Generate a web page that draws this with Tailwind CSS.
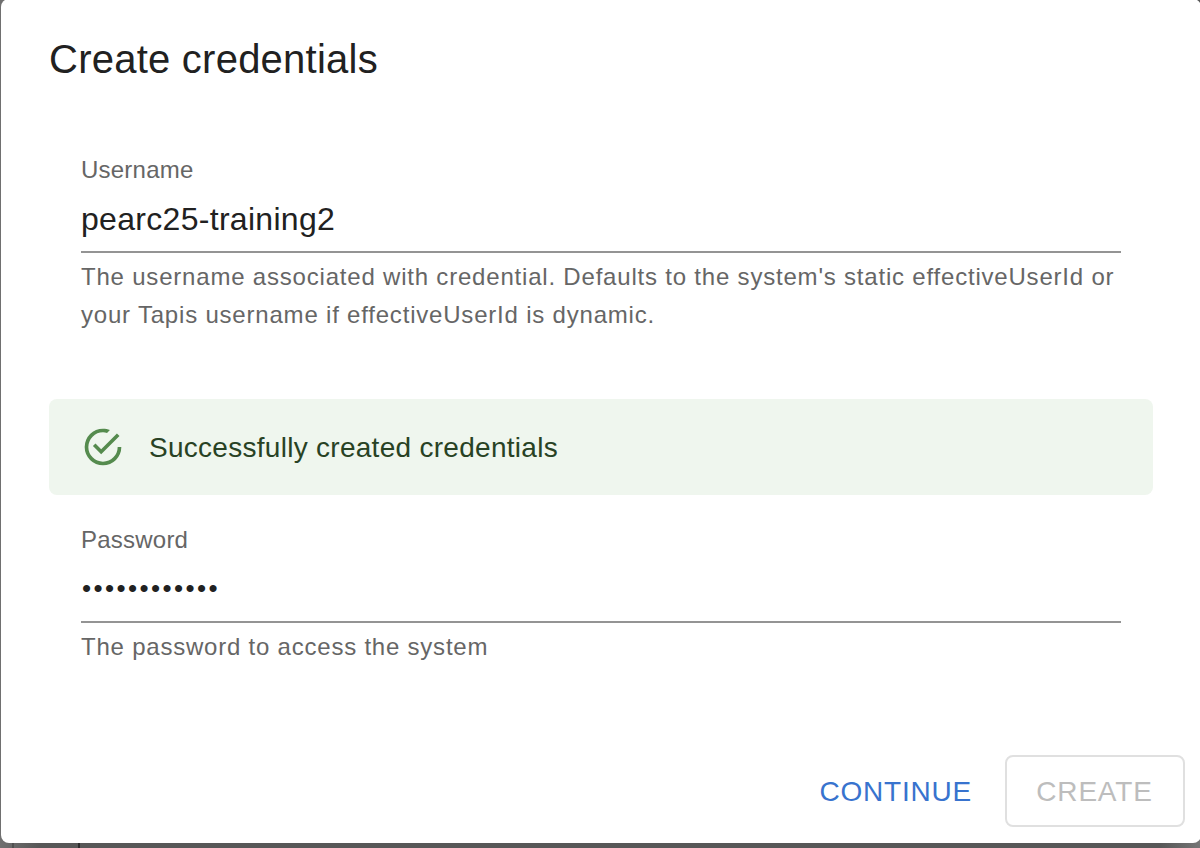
<!DOCTYPE html>
<html lang="en">
<head>
<meta charset="utf-8">
<title>Create credentials</title>
<script src="https://cdn.jsdelivr.net/npm/@tailwindcss/browser@4"></script>
</head>
<body class="relative h-[848px] w-[1200px] overflow-hidden bg-[#575757] font-['Liberation_Sans',Arial,sans-serif] antialiased">
<!-- dimmed page behind the dialog -->
<div class="absolute inset-0 bg-linear-to-r from-[#707070] to-[#575757] to-[40px]"></div>
<div class="absolute bottom-0 left-[12px] h-[5px] w-[2px] bg-[#505050]"></div>
<div class="absolute bottom-0 left-[78px] h-[5px] w-[2px] bg-[#2c2c2c]"></div>
<div class="absolute right-0 bottom-0 h-[12px] w-[40px] bg-linear-to-r from-[#575757] to-[#757575]"></div>
<main role="dialog" class="relative -mt-px ml-px flex h-[844px] w-[1200px] flex-col rounded-[8px] bg-white">
  <h1 class="mt-[28px] ml-[48px] text-[40px] leading-[64px] tracking-[0.24px] text-[#212121]">Create credentials</h1>
  <section class="mt-[60px] ml-[80px] w-[1040px]">
    <label class="block h-[38px] text-[24px] leading-[38px] tracking-[0.225px] text-[#666]">Username</label>
    <div class="h-[64px] border-b-2 border-[#949494] pt-[7px] text-[32px] leading-[46px] tracking-[0.3px] text-[#212121]">pearc25-training2</div>
    <p class="mt-[5px] text-[24px] leading-[38px] tracking-[0.8px] text-[#666]">The username associated with credential. Defaults to the system's static effectiveUserId or<br>your Tapis username if effectiveUserId is dynamic.</p>
  </section>
  <div role="alert" class="mt-[65px] ml-[48px] flex h-[96px] w-[1104px] items-center rounded-[8px] bg-[#eff6ee] pl-[32px]">
    <svg class="size-[44px] fill-[#558b4e]" viewBox="0 0 24 24"><path d="M20,12A8,8 0 0,1 12,20A8,8 0 0,1 4,12A8,8 0 0,1 12,4C12.76,4 13.5,4.11 14.2,4.31L15.77,2.74C14.61,2.26 13.34,2 12,2A10,10 0 0,0 2,12A10,10 0 0,0 12,22A10,10 0 0,0 22,12M7.91,10.08L6.5,11.5L11,16L21,6L19.59,4.58L11,13.17L7.91,10.08Z"/></svg>
    <span class="ml-[24px] pt-[2px] text-[28px] leading-[40px] tracking-[0.28px] text-[#284224]">Successfully created credentials</span>
  </div>
  <section class="mt-[26px] ml-[80px] w-[1040px]">
    <label class="block h-[38px] text-[24px] leading-[38px] tracking-[0.225px] text-[#666]">Password</label>
    <div class="h-[64px] border-b-2 border-[#949494] pt-[6px] pl-px text-[26px] leading-[46px] tracking-[2.4px] text-[#212121]">••••••••••••</div>
    <p class="mt-[5px] text-[24px] leading-[38px] tracking-[0.78px] text-[#666]">The password to access the system</p>
  </section>
  <div class="mt-auto mr-[16px] mb-[16px] flex justify-end gap-[16px] text-[28px] leading-[49px] tracking-[0.8px]">
    <button class="pr-[17px] pl-[16px] text-[#3873ce]">CONTINUE</button>
    <button class="h-[72px] w-[180px] rounded-[8px] border-2 border-[#e0e0e0] pr-px text-[#bdbdbd]">CREATE</button>
  </div>
</main>
</body>
</html>
